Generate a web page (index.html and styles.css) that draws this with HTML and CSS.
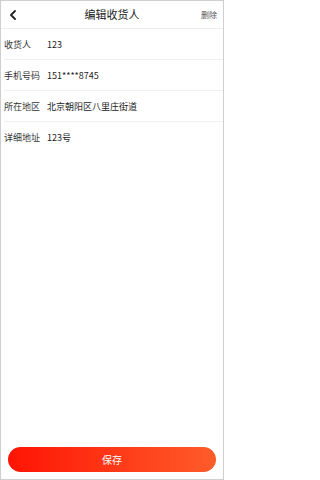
FILE: index.html
```html
<!DOCTYPE html>
<html lang="zh-CN">
<head>
<meta charset="utf-8">
<title>编辑收货人</title>
<link rel="stylesheet" href="styles.css">
</head>
<body>
<div class="page">
  <header class="topbar">
    <span class="back">
      <svg width="8" height="10" viewBox="0 0 8 10"><path d="M6 1 L2 5 L6 9" fill="none" stroke="#222" stroke-width="1.8" stroke-linecap="round" stroke-linejoin="round"/></svg>
    </span>
    <h1 class="title">编辑收货人</h1>
    <span class="del">删除</span>
  </header>
  <div class="form">
    <div class="row"><span class="label">收货人</span><span class="value">123</span></div>
    <div class="row"><span class="label">手机号码</span><span class="value">151****8745</span></div>
    <div class="row"><span class="label">所在地区</span><span class="value">北京朝阳区八里庄街道</span></div>
    <div class="row last"><span class="label">详细地址</span><span class="value">123号</span></div>
  </div>
  <div class="footer">
    <button class="save">保存</button>
  </div>
</div>
</body>
</html>
```
FILE: styles.css
```css
html, body {
  margin: 0;
  padding: 0;
  background: #fff;
}
body {
  font-family: "Noto Sans CJK SC", "Noto Sans", sans-serif;
  color: #333;
}
.page {
  box-sizing: border-box;
  width: 224px;
  height: 480px;
  border: 1px solid #cfcfcf;
  display: flex;
  flex-direction: column;
}
.topbar {
  height: 27px;
  display: flex;
  align-items: center;
  justify-content: space-between;
  padding: 0 6px 0 8px;
  border-bottom: 1px solid #ececec;
  position: relative;
}
.back {
  display: flex;
  width: 10px;
  height: 12px;
  align-items: center;
}
.title {
  margin: 0;
  font-size: 11px;
  font-weight: normal;
  color: #222;
  position: absolute;
  left: 0;
  right: 0;
  text-align: center;
  line-height: 27px;
  pointer-events: none;
}
.del {
  font-size: 8px;
  color: #555;
}
.form {
  padding-left: 3px;
}
.row {
  height: 30px;
  display: flex;
  align-items: center;
  border-bottom: 1px solid #f0f0f0;
  font-size: 9px;
}
.row.last {
  border-bottom: none;
}
.label {
  width: 43px;
  flex: none;
  color: #333;
}
.value {
  color: #222;
}
.footer {
  margin-top: auto;
  padding: 0 7px 7px;
}
.save {
  display: block;
  width: 100%;
  height: 25px;
  border: none;
  border-radius: 13px;
  background: linear-gradient(90deg, #ff1404, #ff5c2a);
  color: #fff;
  font-family: "Noto Sans CJK SC", sans-serif;
  font-size: 10px;
  padding: 0;
}
```
